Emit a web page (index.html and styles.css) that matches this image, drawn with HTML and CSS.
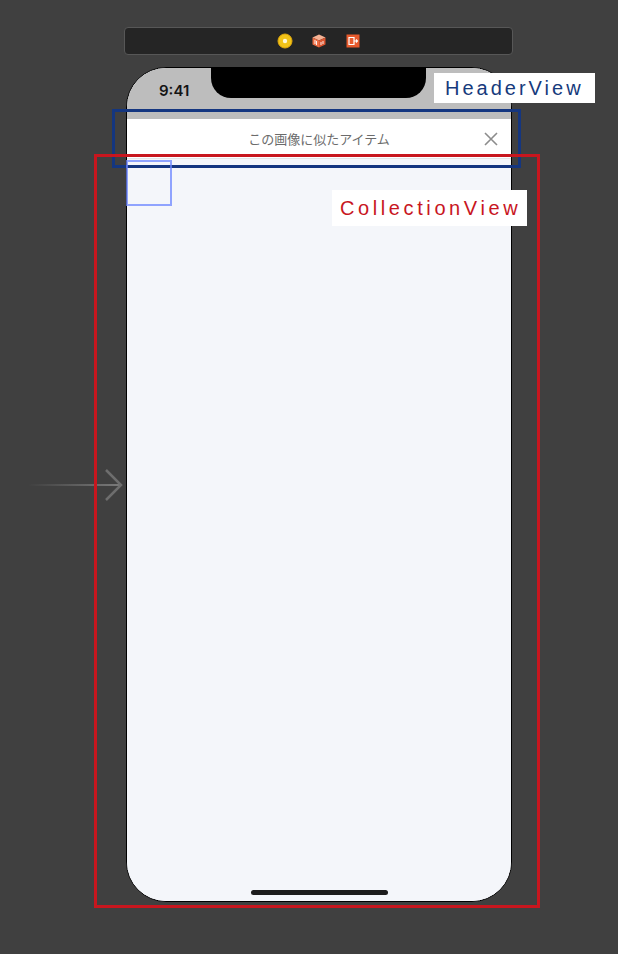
FILE: index.html
```html
<!DOCTYPE html>
<html lang="ja">
<head>
  <meta charset="utf-8">
  <title>Storyboard</title>
  <link rel="stylesheet" href="styles.css">
</head>
<body>
  <div class="stage">
    <div class="toolbar">
      <svg class="tool-icon" viewBox="0 0 16 16" width="16" height="16">
        <circle cx="8" cy="8" r="7" fill="#f2c318" stroke="#e0a80c" stroke-width="1"/>
        <circle cx="8" cy="8" r="2.2" fill="#fff8d8"/>
      </svg>
      <svg class="tool-icon" viewBox="0 0 16 16" width="16" height="16">
        <path d="M8 1.5 L14.5 4.5 L8 7.5 L1.5 4.5 Z" fill="#f6b294"/>
        <path d="M1.5 4.5 L8 7.5 L8 14.5 L1.5 11.5 Z" fill="#ec6d44"/>
        <path d="M14.5 4.5 L8 7.5 L8 14.5 L14.5 11.5 Z" fill="#dc5630"/>
        <path d="M4 7 L4 11 M5.5 8 L5.5 12 M10 9 L10 12 M12 8 L12 11" stroke="#fff" stroke-width="0.9"/>
      </svg>
      <svg class="tool-icon" viewBox="0 0 16 16" width="16" height="16">
        <rect x="1.5" y="1.5" width="13" height="13" fill="#e85a2c"/>
        <path d="M4 4.5 H9 V11.5 H4 Z" fill="none" stroke="#fff" stroke-width="1.2"/>
        <path d="M9 8 H12.5 M11 6.5 L12.5 8 L11 9.5" fill="none" stroke="#fff" stroke-width="1.1"/>
      </svg>
    </div>

    <div class="phone">
      <div class="status">
        <span class="time">9:41</span>
        <div class="notch"></div>
      </div>
      <div class="header">
        <span class="title">この画像に似たアイテム</span>
        <svg class="close" viewBox="0 0 14 14" width="14" height="14">
          <path d="M1 1 L13 13 M13 1 L1 13" stroke="#8c8c8c" stroke-width="1.6"/>
        </svg>
      </div>
      <div class="collection">
        <div class="home-bar"></div>
      </div>
    </div>

    <svg class="entry-arrow" viewBox="0 0 96 34" width="96" height="34">
      <defs>
        <linearGradient id="fade" x1="0" x2="1" y1="0" y2="0">
          <stop offset="0" stop-color="#7a7a7a" stop-opacity="0"/>
          <stop offset="1" stop-color="#7a7a7a" stop-opacity="1"/>
        </linearGradient>
      </defs>
      <rect x="0" y="16" width="92" height="2" fill="url(#fade)"/>
      <path d="M78 2 L93 17 L78 32" fill="none" stroke="#6e6e6e" stroke-width="2.5"/>
    </svg>

    <div class="outline outline-header"></div>
    <div class="cell-outline"></div>
    <div class="outline outline-collection"></div>
    <div class="tag tag-header">HeaderView</div>
    <div class="tag tag-collection">CollectionView</div>
  </div>
</body>
</html>
```

FILE: styles.css
```css
html, body {
  margin: 0;
  padding: 0;
  background-color: #404040;
  font-family: "Liberation Sans", "Noto Sans CJK JP", sans-serif;
  overflow: hidden;
}

.stage {
  position: relative;
  width: 618px;
  height: 954px;
  padding-top: 27px;
  box-sizing: border-box;
}

.toolbar {
  margin-left: 124px;
  width: 389px;
  height: 28px;
  box-sizing: border-box;
  background: #252525;
  border: 1px solid #575757;
  border-radius: 4px;
  display: flex;
  align-items: center;
  justify-content: center;
  gap: 18px;
}

.tool-icon {
  display: block;
}

.phone {
  margin: 12px 0 0 126px;
  width: 386px;
  height: 835px;
  box-sizing: border-box;
  border: 1px solid #000;
  border-radius: 40px;
  overflow: hidden;
  display: flex;
  flex-direction: column;
  background: #f4f6fa;
}

.status {
  height: 51px;
  background: #bdbdbd;
  display: grid;
  grid-template-columns: 84px 215px 1fr;
  align-items: start;
}

.time {
  padding: 14px 0 0 32px;
  font-family: Inter, "Liberation Sans", sans-serif;
  font-size: 15px;
  line-height: 18px;
  font-weight: 600;
  color: #141414;
}

.notch {
  height: 30px;
  background: #000;
  border-radius: 0 0 20px 20px;
}

.header {
  height: 39px;
  background: #fff;
  border-bottom: 1px solid #e2e4e8;
  display: grid;
  grid-template-columns: 1fr auto 1fr;
  align-items: center;
  padding-right: 13px;
  padding-left: 13px;
}

.title {
  grid-column: 2;
  font-family: "Noto Sans CJK JP", sans-serif;
  font-size: 13px;
  color: #6b6b6b;
}

.close {
  grid-column: 3;
  justify-self: end;
}

.collection {
  flex: 1;
  background: #f4f6fa;
  display: flex;
  flex-direction: column;
  justify-content: flex-end;
  align-items: center;
  padding-bottom: 6px;
}

.home-bar {
  width: 137px;
  height: 5px;
  border-radius: 3px;
  background: #1c1c1c;
}

.entry-arrow {
  position: absolute;
  left: 28px;
  top: 468px;
}

.outline {
  position: absolute;
  box-sizing: border-box;
  border-style: solid;
  border-width: 3px;
}

.outline-header {
  left: 112px;
  top: 109px;
  width: 409px;
  height: 59px;
  border-color: #143680;
}

.outline-collection {
  left: 94px;
  top: 154px;
  width: 446px;
  height: 754px;
  border-color: #c8161e;
}

.cell-outline {
  position: absolute;
  left: 126px;
  top: 160px;
  width: 46px;
  height: 46px;
  box-sizing: border-box;
  border: 2px solid rgba(110, 135, 255, 0.75);
}

.tag {
  position: absolute;
  background: #fff;
  font-size: 20px;
  letter-spacing: 3px;
  line-height: 1;
  box-sizing: border-box;
  display: flex;
  align-items: center;
}

.tag-header {
  left: 434px;
  top: 73px;
  width: 161px;
  height: 30px;
  padding-left: 11px;
  color: #163a7c;
}

.tag-collection {
  left: 332px;
  top: 190px;
  width: 195px;
  height: 36px;
  padding-left: 8px;
  letter-spacing: 3.6px;
  color: #c8161e;
}
```
